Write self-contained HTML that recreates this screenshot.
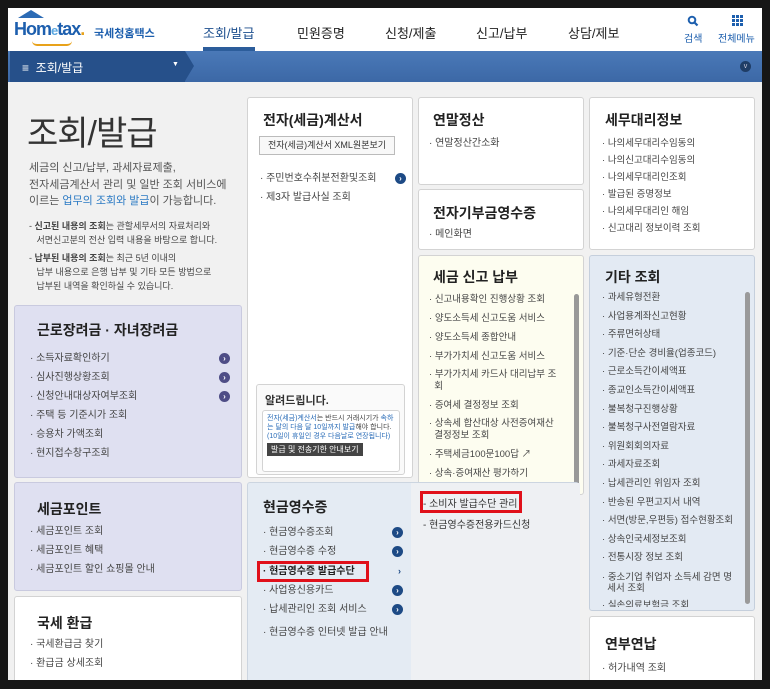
<!DOCTYPE html>
<html><head><meta charset="utf-8"><style>
*{margin:0;padding:0;box-sizing:border-box}
body{width:770px;height:689px;background:#161616;font-family:"Liberation Sans","Noto Sans CJK KR",sans-serif;color:#333;position:relative;overflow:hidden}
#page{position:absolute;left:8px;top:8px;width:754px;height:672px;background:#f1f1f1;overflow:hidden}
.a{position:absolute}
#hdr{left:0;top:0;width:754px;height:43px;background:#fff}
.nav{top:15px;font-size:13px;color:#222}
#bar{left:0;top:43px;width:754px;height:31px;background:linear-gradient(#4a79b8,#3c68a6)}
#bar .l{left:2px;top:0;width:175px;height:31px;background:#26508a}
.box{position:absolute;border:1px solid #d3d3d3;border-radius:3px;background:#fff}
.box h3{position:absolute;font-size:14px;font-weight:bold;color:#222}
ul{list-style:none;position:absolute;font-size:10px;color:#444}
ul li{height:19px;line-height:19px;position:relative}
ul li:before{content:"· ";}
.ic{position:absolute;width:11px;height:11px;border-radius:50%;background:#1d4a85;color:#fff;font-size:8px;line-height:11px;text-align:center;font-weight:bold}
.ic2{background:#4e4d86}
.sb{position:absolute;width:5px;border-radius:3px;background:#999}
</style></head><body>
<div id="page">
 <div id="hdr" class="a">
  <div class="a" style="left:10px;top:2px;width:0;height:0;border-bottom:8px solid #2c6bb5;border-left:13px solid transparent;border-right:13px solid transparent"></div>
  <div class="a" style="left:6px;top:11px;font-size:18px;font-weight:bold;color:#1d5fae;letter-spacing:-1px">Hom<span style="color:#5aa7e0;font-size:13px">e</span>tax<span style="color:#e8a21a">.</span></div>
  <div class="a" style="left:86px;top:17px;font-size:11px;font-weight:bold;color:#1d5fae">국세청홈택스</div>
  <div class="a" style="left:24px;top:33px;width:40px;height:5px;border-bottom:2px solid #e8a21a;border-radius:0 0 20px 20px"></div>
  <div class="a nav" style="left:195px;color:#1d4f8e">조회/발급</div>
  <div class="a" style="left:195px;top:39px;width:52px;height:4px;background:#2c5d9b"></div>
  <div class="a nav" style="left:289px">민원증명</div>
  <div class="a nav" style="left:377px">신청/제출</div>
  <div class="a nav" style="left:468px">신고/납부</div>
  <div class="a nav" style="left:560px">상담/제보</div>
  <svg class="a" style="left:679px;top:7px" width="12" height="12" viewBox="0 0 12 12"><circle cx="5" cy="5" r="3.3" fill="none" stroke="#1d5fae" stroke-width="2"/><path d="M7.5 7.5L10.5 10.5" stroke="#1d5fae" stroke-width="2.2"/></svg>
  <div class="a" style="left:676px;top:22px;font-size:10px;color:#1d5fae">검색</div>
  <svg class="a" style="left:724px;top:7px" width="11" height="11" viewBox="0 0 11 11" fill="#1d5fae"><rect x="0" y="0" width="3" height="3"/><rect x="4" y="0" width="3" height="3"/><rect x="8" y="0" width="3" height="3"/><rect x="0" y="4" width="3" height="3"/><rect x="4" y="4" width="3" height="3"/><rect x="8" y="4" width="3" height="3"/><rect x="0" y="8" width="3" height="3"/><rect x="4" y="8" width="3" height="3"/><rect x="8" y="8" width="3" height="3"/></svg>
  <div class="a" style="left:710px;top:22px;font-size:10px;color:#1d5fae">전체메뉴</div>
 </div>
 <div id="bar" class="a">
  <div class="a l"></div>
  <div class="a" style="left:177px;top:0;width:0;height:0;border-top:15.5px solid transparent;border-bottom:15.5px solid transparent;border-left:9px solid #26508a"></div>
  <div class="a" style="left:14px;top:8px;font-size:12px;color:#fff">≡&nbsp; 조회/발급</div>
  <div class="a" style="left:164px;top:10px;font-size:7px;color:#fff">▼</div>
  <div class="a" style="left:732px;top:10px;width:11px;height:11px;border-radius:50%;background:#1f3d66;color:#ccd;font-size:7px;text-align:center;line-height:11px">v</div>
 </div>

 <div class="a" style="left:19px;top:98px;font-size:34px;color:#333;letter-spacing:-1px">조회/발급</div>
 <div class="a" style="left:21px;top:152px;font-size:11px;line-height:16.5px;color:#555">세금의 신고/납부, 과세자료제출,<br>전자세금계산서 관리 및 일반 조회 서비스에<br>이르는 <span style="color:#2b7ac4">업무의 조회와 발급</span>이 가능합니다.</div>
 <div class="a" style="left:21px;top:211px;font-size:9px;line-height:14px;color:#444">- <b>신고된 내용의 조회</b>는 관할세무서의 자료처리와<br>&nbsp;&nbsp; 서면신고분의 전산 입력 내용을 바탕으로 합니다.</div>
 <div class="a" style="left:21px;top:243px;font-size:9px;line-height:14px;color:#444">- <b>납부된 내용의 조회</b>는 최근 5년 이내의<br>&nbsp;&nbsp; 납부 내용으로 은행 납부 및 기타 모든 방법으로<br>&nbsp;&nbsp; 납부된 내역을 확인하실 수 있습니다.</div>

 <div class="box" style="left:6px;top:297px;width:228px;height:173px;background:#dfe0f1;border-color:#c9cadf">
  <h3 style="left:22px;top:14px">근로장려금 · 자녀장려금</h3>
  <ul style="left:15px;top:43px;width:200px">
   <li>소득자료확인하기<span class="ic ic2" style="right:0;top:4px">›</span></li>
   <li>심사진행상황조회<span class="ic ic2" style="right:0;top:4px">›</span></li>
   <li>신청안내대상자여부조회<span class="ic ic2" style="right:0;top:4px">›</span></li>
   <li>주택 등 기준시가 조회</li><li>승용차 가액조회</li><li>현지접수창구조회</li>
  </ul>
 </div>
 <div class="box" style="left:6px;top:474px;width:228px;height:109px;background:#dfe0f1;border-color:#c9cadf">
  <h3 style="left:22px;top:16px">세금포인트</h3>
  <ul style="left:15px;top:39px"><li>세금포인트 조회</li><li>세금포인트 혜택</li><li>세금포인트 할인 쇼핑몰 안내</li></ul>
 </div>
 <div class="box" style="left:6px;top:588px;width:228px;height:90px">
  <h3 style="left:22px;top:16px">국세 환급</h3>
  <ul style="left:15px;top:38px"><li>국세환급금 찾기</li><li>환급금 상세조회</li></ul>
 </div>

 <div class="box" style="left:239px;top:89px;width:166px;height:381px">
  <h3 style="left:15px;top:12px">전자(세금)계산서</h3>
  <div class="a" style="left:11px;top:38px;width:136px;height:19px;border:1px solid #bbb;background:#f8f8f8;font-size:9px;text-align:center;line-height:17px;color:#333">전자(세금)계산서 XML원본보기</div>
  <ul style="left:12px;top:71px;width:146px"><li>주민번호수취분전환및조회<span class="ic" style="right:0;top:4px">›</span></li><li>제3자 발급사실 조회</li></ul>
  <div class="box" style="left:8px;top:286px;width:149px;height:91px;background:#fafafa">
   <div class="a" style="left:8px;top:7px;font-size:11px;font-weight:bold">알려드립니다.</div>
   <div class="box" style="left:5px;top:25px;width:138px;height:62px;font-size:7px;line-height:9px;padding:3px 4px;color:#444"><span style="color:#2b6db8">전자(세금)계산서</span>는 반드시 거래시기가 <span style="color:#2b6db8">속하는 달의 다음 달 10일까지 발급</span>해야 합니다.<br><span style="color:#2b6db8">(10일이 휴일인 경우 다음날로 연장됩니다)</span>
    <div style="margin-top:2px;display:inline-block;background:#444;color:#fff;padding:1px 4px;font-size:8px;line-height:11px">발급 및 전송기한 안내보기</div></div>
  </div>
 </div>

 <div class="box" style="left:410px;top:89px;width:166px;height:88px">
  <h3 style="left:14px;top:12px">연말정산</h3>
  <ul style="left:10px;top:36px"><li>연말정산간소화</li></ul>
 </div>
 <div class="box" style="left:410px;top:181px;width:166px;height:61px">
  <h3 style="left:14px;top:13px">전자기부금영수증</h3>
  <ul style="left:10px;top:35px"><li>메인화면</li></ul>
 </div>
 <div class="box" style="left:410px;top:247px;width:166px;height:240px;background:#fdfdf0">
  <h3 style="left:14px;top:11px">세금 신고 납부</h3>
  <ul style="left:10px;top:34px;width:148px;font-size:9.5px">
   <li>신고내용확인 진행상황 조회</li><li>양도소득세 신고도움 서비스</li><li>양도소득세 종합안내</li><li>부가가치세 신고도움 서비스</li>
   <li style="height:30px;line-height:12px;padding-top:3px">부가가치세 카드사 대리납부 조<br>&nbsp;&nbsp;회</li>
   <li>증여세 결정정보 조회</li>
   <li style="height:30px;line-height:12px;padding-top:3px">상속세 합산대상 사전증여재산<br>&nbsp;&nbsp;결정정보 조회</li>
   <li>주택세금100문100답 ↗</li><li>상속·증여재산 평가하기</li>
  </ul>
  <div class="sb" style="left:155px;top:38px;height:200px"></div>
 </div>

 <div class="box" style="left:581px;top:89px;width:166px;height:153px">
  <h3 style="left:15px;top:12px">세무대리정보</h3>
  <ul style="left:12px;top:37px;font-size:9.5px;line-height:17px"><li style="height:17px;line-height:17px">나의세무대리수임동의</li><li style="height:17px;line-height:17px">나의신고대리수임동의</li><li style="height:17px;line-height:17px">나의세무대리인조회</li><li style="height:17px;line-height:17px">발급된 증명정보</li><li style="height:17px;line-height:17px">나의세무대리인 해임</li><li style="height:17px;line-height:17px">신고대리 정보이력 조회</li></ul>
 </div>
 <div class="box" style="left:581px;top:247px;width:166px;height:356px;background:#e3eaf3;border-color:#c5cfdc">
  <h3 style="left:15px;top:11px">기타 조회</h3>
  <ul style="left:12px;top:33px;width:148px;font-size:9.5px;height:318px;overflow:hidden">
   <li style="height:18.6px;line-height:18.6px">과세유형전환</li><li style="height:18.6px;line-height:18.6px">사업용계좌신고현황</li><li style="height:18.6px;line-height:18.6px">주류면허상태</li><li style="height:18.6px;line-height:18.6px">기준·단순 경비율(업종코드)</li><li style="height:18.6px;line-height:18.6px">근로소득간이세액표</li><li style="height:18.6px;line-height:18.6px">종교인소득간이세액표</li><li style="height:18.6px;line-height:18.6px">불복청구진행상황</li><li style="height:18.6px;line-height:18.6px">불복청구사전열람자료</li><li style="height:18.6px;line-height:18.6px">위원회회의자료</li><li style="height:18.6px;line-height:18.6px">과세자료조회</li><li style="height:18.6px;line-height:18.6px">납세관리인 위임자 조회</li><li style="height:18.6px;line-height:18.6px">반송된 우편고지서 내역</li><li style="height:18.6px;line-height:18.6px;white-space:nowrap">서면(방문,우편등) 접수현황조회</li><li style="height:18.6px;line-height:18.6px">상속인국세정보조회</li><li style="height:18.6px;line-height:18.6px">전통시장 정보 조회</li>
   <li style="height:28px;line-height:11px;padding-top:4px">중소기업 취업자 소득세 감면 명<br>&nbsp;&nbsp;세서 조회</li><li>실손의료보험금 조회</li>
  </ul>
  <div class="sb" style="left:155px;top:36px;height:312px;background:#9a9a9a"></div>
 </div>
 <div class="box" style="left:581px;top:608px;width:166px;height:70px">
  <h3 style="left:15px;top:17px">연부연납</h3>
  <ul style="left:12px;top:42px"><li>허가내역 조회</li></ul>
 </div>

 <div class="box" style="left:239px;top:474px;width:332px;height:204px;background:#e4ebf3;border-color:#ccd5e0">
  <div class="a" style="left:163px;top:0;width:169px;height:204px;background:#eef0f3"></div>
  <h3 style="left:15px;top:14px">현금영수증</h3>
  <ul style="left:15px;top:40px;width:140px;font-size:10px">
   <li style="height:19.3px">현금영수증조회<span class="ic" style="right:0;top:4px">›</span></li>
   <li style="height:19.3px">현금영수증 수정<span class="ic" style="right:0;top:4px">›</span></li>
   <li style="height:19.3px;font-weight:bold;color:#222">현금영수증 발급수단<span style="position:absolute;right:2px;top:0;font-size:9px;color:#1d4a85">›</span></li>
   <li style="height:19.3px">사업용신용카드<span class="ic" style="right:0;top:4px">›</span></li>
   <li style="height:19.3px">납세관리인 조회 서비스<span class="ic" style="right:0;top:4px">›</span></li>
   <li style="margin-top:4px">현금영수증 인터넷 발급 안내</li>
  </ul>
  <div class="a" style="left:9px;top:78px;width:112px;height:21px;border:3px solid #e0101a"></div>
  <div class="a" style="left:175px;top:12px;font-size:10px;color:#333">- 소비자 발급수단 관리</div>
  <div class="a" style="left:172px;top:8px;width:102px;height:22px;border:3px solid #e0101a"></div>
  <div class="a" style="left:175px;top:33px;font-size:10px;color:#333">- 현금영수증전용카드신청</div>
 </div>
</div>
</body></html>
